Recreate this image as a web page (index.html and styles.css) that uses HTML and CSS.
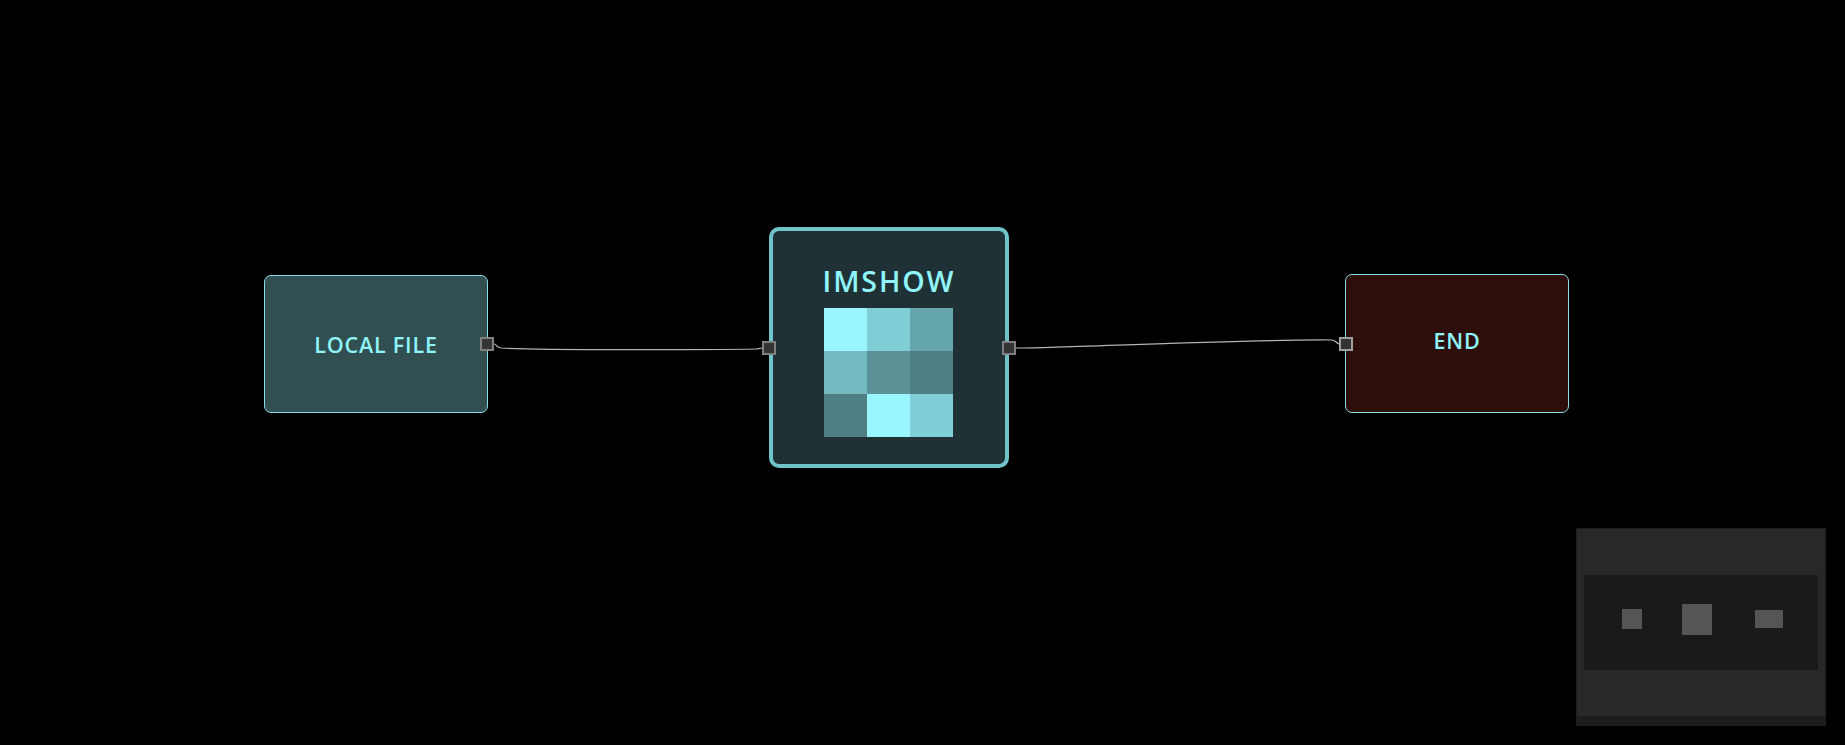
FILE: index.html
```html
<!DOCTYPE html>
<html lang="en">
<head>
<meta charset="UTF-8">
<meta name="viewport" content="width=device-width, initial-scale=1.0">
<title>Flow Editor</title>
<link rel="stylesheet" href="styles.css">
</head>
<body>
<div class="canvas">
    <svg class="edges" width="1845" height="745" viewBox="0 0 1845 745">
        <path d="M494 344 C497 344 495 347 501 348 C540 350 700 350 756 349 C759 349 760 348 762 348"/>
        <path d="M1016 348 C1060 348 1250 339 1331 340 C1336 340 1336 343 1339 344"/>
    </svg>

    <div class="node node-local">
        <span class="node-label">LOCAL FILE</span>
        <span class="handle handle-right"></span>
    </div>

    <div class="node node-imshow">
        <span class="handle handle-left"></span>
        <h2 class="imshow-title">IMSHOW</h2>
        <div class="heatmap">
            <div class="cell c1"></div>
            <div class="cell c2"></div>
            <div class="cell c3"></div>
            <div class="cell c4"></div>
            <div class="cell c5"></div>
            <div class="cell c6"></div>
            <div class="cell c6"></div>
            <div class="cell c1"></div>
            <div class="cell c2"></div>
        </div>
        <span class="handle handle-right"></span>
    </div>

    <div class="node node-end">
        <span class="handle handle-left"></span>
        <span class="node-label">END</span>
    </div>

    <div class="minimap">
        <div class="minimap-view">
            <div class="mini-node mini-local"></div>
            <div class="mini-node mini-imshow"></div>
            <div class="mini-node mini-end"></div>
        </div>
    </div>
</div>
</body>
</html>
```

FILE: styles.css
```css
html, body {
    margin: 0;
    padding: 0;
    height: 100%;
    background-color: #000;
    overflow: hidden;
}

.canvas {
    position: relative;
    width: 1845px;
    height: 745px;
    font-family: "Open Sans", sans-serif;
    color: #8ff5fb;
}

.edges {
    position: absolute;
    left: 0;
    top: 0;
}
.edges path {
    fill: none;
    stroke: #b4b4b4;
    stroke-width: 1.2;
}

/* nodes sit on a free canvas, so they keep their own coordinates */
.node {
    position: absolute;
    box-sizing: border-box;
    display: flex;
    align-items: center;
    justify-content: center;
    border: 1px solid #85e0e6;
    border-radius: 7px;
}
.node-label {
    font-size: 21.5px;
    font-weight: 650;
    letter-spacing: 0.8px;
}
.node-local {
    left: 264px;
    top: 275px;
    width: 224px;
    height: 138px;
    background-color: #314f51;
}
.node-local .node-label {
    margin-top: 1px;
}
.node-end {
    left: 1345px;
    top: 274px;
    width: 224px;
    height: 139px;
    background-color: #2d0e0b;
}
.node-end .node-label {
    margin-bottom: 6px;
}
.node-imshow {
    left: 769px;
    top: 227px;
    width: 240px;
    height: 241px;
    flex-direction: column;
    justify-content: flex-start;
    border: 4px solid #6fc4ca;
    border-radius: 10px;
    background-color: #203135;
}

.imshow-title {
    margin: 38px 0 0;
    height: 39px;
    line-height: 24px;
    font-size: 28.5px;
    font-weight: 650;
    letter-spacing: 1.9px;
}

.heatmap {
    display: grid;
    grid-template-columns: repeat(3, 43px);
    grid-template-rows: repeat(3, 43px);
    margin-right: 2px;
}
.c1 { background-color: #99f6ff; }
.c2 { background-color: #80ced6; }
.c3 { background-color: #66a6ad; }
.c4 { background-color: #73bac1; }
.c5 { background-color: #5b9298; }
.c6 { background-color: #4f7e84; }

.handle {
    position: absolute;
    box-sizing: border-box;
    width: 14px;
    height: 14px;
    background-color: #333;
    border: 2px solid #808080;
}
.node-local .handle { top: 61px; right: -7px; }
.node-imshow .handle { top: 110px; }
.node-imshow .handle-left { left: -11px; }
.node-imshow .handle-right { right: -11px; }
.node-end .handle { top: 62px; left: -7px; border-color: #a0a0a0; }

.minimap {
    position: absolute;
    left: 1576px;
    top: 528px;
    width: 250px;
    height: 198px;
    box-sizing: border-box;
    padding: 46px 7px 0;
    background-color: #282828;
    border: 1px solid #1c1c1c;
    border-bottom-width: 10px;
}
.minimap-view {
    position: relative;
    height: 95px;
    background-color: #1a1a1a;
}
.mini-node {
    position: absolute;
    background-color: #555;
}
.mini-local { left: 38px; top: 34px; width: 20px; height: 20px; }
.mini-imshow { left: 98px; top: 29px; width: 30px; height: 31px; }
.mini-end { left: 171px; top: 35px; width: 28px; height: 18px; }
```
